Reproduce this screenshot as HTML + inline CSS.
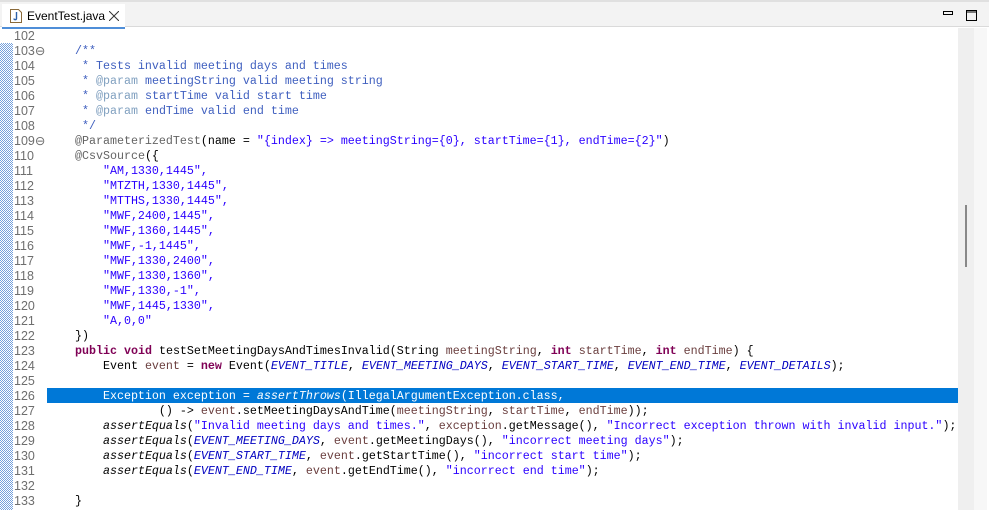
<!DOCTYPE html>
<html><head><style>
body{margin:0;width:989px;height:510px;overflow:hidden;background:#fff;font-family:"Liberation Sans",sans-serif;position:relative}
.hdr{position:absolute;left:0;top:0;width:989px;height:27px;background:#f3f3f3;border-top:2px solid #e0e0e0;box-sizing:border-box;border-bottom:1px solid #dadada}
.tab{position:absolute;left:2px;top:2px;width:123px;height:25px;background:#fff;border-bottom:2px solid #4f8ed8;box-sizing:border-box;font-size:12px;color:#000}
.code{position:absolute;left:0;top:28px;width:958px}
.ln{height:15px;line-height:15px;font-family:"Liberation Mono",monospace;font-size:11.67px;white-space:pre;position:relative}
.ln .n{position:absolute;left:14px;top:1px;color:#6e6e6e;font-family:"Liberation Sans",sans-serif;font-size:12.5px}
.ln .t{position:absolute;left:47px;top:1px}
.ln .t.sel{top:0;padding-top:1px;height:14px}
.sel{background:#0078d7;color:#fff}
.sel span{color:#fff!important}
.c{color:#3f5fbf}.p{color:#7f9fbf}.a{color:#646464}.s{color:#2a00ff}.k{color:#7f0055;font-weight:bold}.f{color:#0000c0;font-style:italic}.v{color:#6a3e3e}.i{font-style:italic}
.chk{position:absolute;left:0;top:43px;width:13px;height:467px;background-image:repeating-conic-gradient(#5b8fd6 0 25%,#fff 0 50%);background-size:2px 2px;opacity:.85}
</style></head><body>
<div class="hdr">
<div class="tab">
<svg style="position:absolute;left:8px;top:5px" width="12" height="14" viewBox="0 0 12 14"><path d="M0.5 0.5h8l3 3v10h-11z" fill="#fff" stroke="#8a6a3a"/><path d="M6.5 3v6.5c0 1.5-2.5 1.5-2.5 0" fill="none" stroke="#2a5fa8" stroke-width="1.4"/></svg>
<span style="position:absolute;left:25px;top:5px">EventTest.java</span>
<svg style="position:absolute;left:107px;top:7px" width="10" height="10"><path d="M0 0L10 10M10 0L0 10" stroke="#333" stroke-width="1"/></svg>
</div>
<svg style="position:absolute;left:943px;top:8px" width="10" height="6"><rect x="0.5" y="1.5" width="9" height="3" fill="none" stroke="#000"/></svg>
<svg style="position:absolute;left:966px;top:8px" width="11" height="11"><rect x="0.5" y="0.5" width="10" height="10" fill="none" stroke="#000"/><line x1="0" y1="2" x2="11" y2="2" stroke="#000"/></svg>
</div>
<div style="position:absolute;left:958px;top:28px;width:16px;height:482px;background:#efefef"></div>
<div style="position:absolute;left:974px;top:28px;width:13px;height:482px;background:#f7f7f7"></div>
<div style="position:absolute;left:965px;top:205px;width:2px;height:62px;background:#888"></div>
<div class="chk"></div>
<div class="code">
<div class="ln"><span class="n">102</span></div>
<div class="ln"><span class="n">103⊖</span><span class="t c">    /**</span></div>
<div class="ln"><span class="n">104</span><span class="t c">     * Tests invalid meeting days and times</span></div>
<div class="ln"><span class="n">105</span><span class="t c">     * <span class="p">@param</span> meetingString valid meeting string</span></div>
<div class="ln"><span class="n">106</span><span class="t c">     * <span class="p">@param</span> startTime valid start time</span></div>
<div class="ln"><span class="n">107</span><span class="t c">     * <span class="p">@param</span> endTime valid end time</span></div>
<div class="ln"><span class="n">108</span><span class="t c">     */</span></div>
<div class="ln"><span class="n">109⊖</span><span class="t">    <span class="a">@ParameterizedTest</span>(name = <span class="s">"{index} =&gt; meetingString={0}, startTime={1}, endTime={2}"</span>)</span></div>
<div class="ln"><span class="n">110</span><span class="t">    <span class="a">@CsvSource</span>({</span></div>
<div class="ln"><span class="n">111</span><span class="t s">        "AM,1330,1445",</span></div>
<div class="ln"><span class="n">112</span><span class="t s">        "MTZTH,1330,1445",</span></div>
<div class="ln"><span class="n">113</span><span class="t s">        "MTTHS,1330,1445",</span></div>
<div class="ln"><span class="n">114</span><span class="t s">        "MWF,2400,1445",</span></div>
<div class="ln"><span class="n">115</span><span class="t s">        "MWF,1360,1445",</span></div>
<div class="ln"><span class="n">116</span><span class="t s">        "MWF,-1,1445",</span></div>
<div class="ln"><span class="n">117</span><span class="t s">        "MWF,1330,2400",</span></div>
<div class="ln"><span class="n">118</span><span class="t s">        "MWF,1330,1360",</span></div>
<div class="ln"><span class="n">119</span><span class="t s">        "MWF,1330,-1",</span></div>
<div class="ln"><span class="n">120</span><span class="t s">        "MWF,1445,1330",</span></div>
<div class="ln"><span class="n">121</span><span class="t s">        "A,0,0"</span></div>
<div class="ln"><span class="n">122</span><span class="t">    })</span></div>
<div class="ln"><span class="n">123</span><span class="t">    <span class="k">public</span> <span class="k">void</span> testSetMeetingDaysAndTimesInvalid(String <span class="v">meetingString</span>, <span class="k">int</span> <span class="v">startTime</span>, <span class="k">int</span> <span class="v">endTime</span>) {</span></div>
<div class="ln"><span class="n">124</span><span class="t">        Event <span class="v">event</span> = <span class="k">new</span> Event(<span class="f">EVENT_TITLE</span>, <span class="f">EVENT_MEETING_DAYS</span>, <span class="f">EVENT_START_TIME</span>, <span class="f">EVENT_END_TIME</span>, <span class="f">EVENT_DETAILS</span>);</span></div>
<div class="ln"><span class="n">125</span></div>
<div class="ln"><span class="n">126</span><span class="t sel" style="width:911px">        Exception exception = <span class="i">assertThrows</span>(IllegalArgumentException.class,</span></div>
<div class="ln"><span class="n">127</span><span class="t">                () -&gt; <span class="v">event</span>.setMeetingDaysAndTime(<span class="v">meetingString</span>, <span class="v">startTime</span>, <span class="v">endTime</span>));</span></div>
<div class="ln"><span class="n">128</span><span class="t">        <span class="i">assertEquals</span>(<span class="s">"Invalid meeting days and times."</span>, <span class="v">exception</span>.getMessage(), <span class="s">"Incorrect exception thrown with invalid input."</span>);</span></div>
<div class="ln"><span class="n">129</span><span class="t">        <span class="i">assertEquals</span>(<span class="f">EVENT_MEETING_DAYS</span>, <span class="v">event</span>.getMeetingDays(), <span class="s">"incorrect meeting days"</span>);</span></div>
<div class="ln"><span class="n">130</span><span class="t">        <span class="i">assertEquals</span>(<span class="f">EVENT_START_TIME</span>, <span class="v">event</span>.getStartTime(), <span class="s">"incorrect start time"</span>);</span></div>
<div class="ln"><span class="n">131</span><span class="t">        <span class="i">assertEquals</span>(<span class="f">EVENT_END_TIME</span>, <span class="v">event</span>.getEndTime(), <span class="s">"incorrect end time"</span>);</span></div>
<div class="ln"><span class="n">132</span></div>
<div class="ln"><span class="n">133</span><span class="t">    }</span></div>
</div>
</body></html>
